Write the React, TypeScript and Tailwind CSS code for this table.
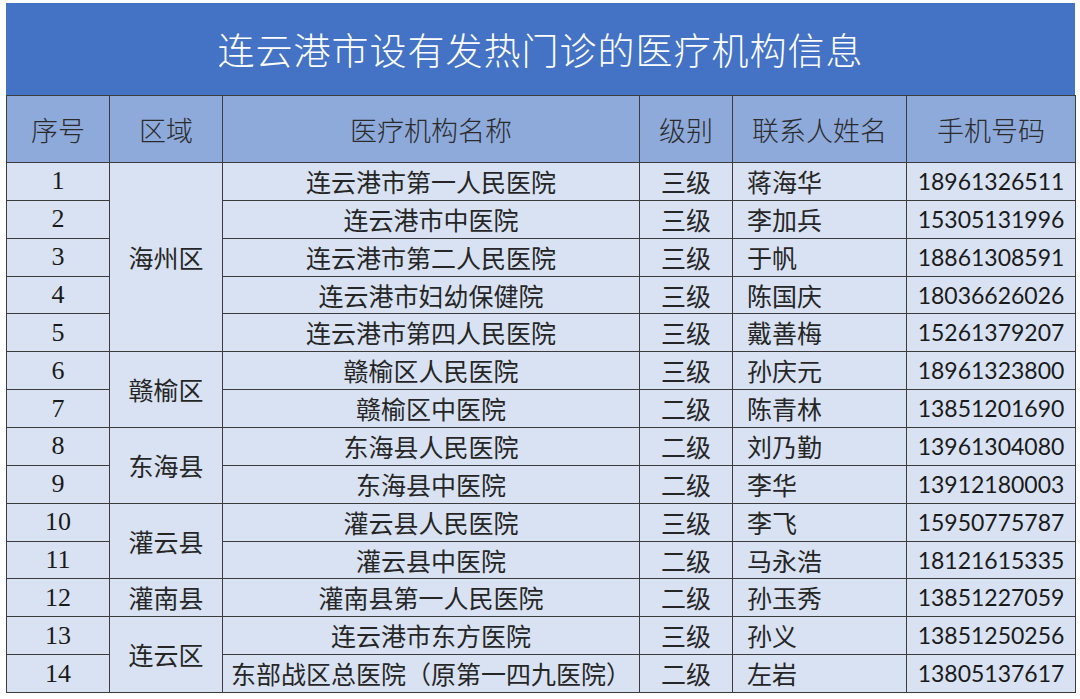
import React from "react";

type Row = {
  no: number;
  name: string;
  level: string;
  contact: string;
  phone: string;
};

type Region = {
  region: string;
  rows: Row[];
};

const regions: Region[] = [
  {
    region: "海州区",
    rows: [
      { no: 1, name: "连云港市第一人民医院", level: "三级", contact: "蒋海华", phone: "18961326511" },
      { no: 2, name: "连云港市中医院", level: "三级", contact: "李加兵", phone: "15305131996" },
      { no: 3, name: "连云港市第二人民医院", level: "三级", contact: "于帆", phone: "18861308591" },
      { no: 4, name: "连云港市妇幼保健院", level: "三级", contact: "陈国庆", phone: "18036626026" },
      { no: 5, name: "连云港市第四人民医院", level: "三级", contact: "戴善梅", phone: "15261379207" },
    ],
  },
  {
    region: "赣榆区",
    rows: [
      { no: 6, name: "赣榆区人民医院", level: "三级", contact: "孙庆元", phone: "18961323800" },
      { no: 7, name: "赣榆区中医院", level: "二级", contact: "陈青林", phone: "13851201690" },
    ],
  },
  {
    region: "东海县",
    rows: [
      { no: 8, name: "东海县人民医院", level: "二级", contact: "刘乃勤", phone: "13961304080" },
      { no: 9, name: "东海县中医院", level: "二级", contact: "李华", phone: "13912180003" },
    ],
  },
  {
    region: "灌云县",
    rows: [
      { no: 10, name: "灌云县人民医院", level: "三级", contact: "李飞", phone: "15950775787" },
      { no: 11, name: "灌云县中医院", level: "二级", contact: "马永浩", phone: "18121615335" },
    ],
  },
  {
    region: "灌南县",
    rows: [
      { no: 12, name: "灌南县第一人民医院", level: "二级", contact: "孙玉秀", phone: "13851227059" },
    ],
  },
  {
    region: "连云区",
    rows: [
      { no: 13, name: "连云港市东方医院", level: "三级", contact: "孙义", phone: "13851250256" },
      { no: 14, name: "东部战区总医院（原第一四九医院）", level: "二级", contact: "左岩", phone: "13805137617" },
    ],
  },
];

const headers = ["序号", "区域", "医疗机构名称", "级别", "联系人姓名", "手机号码"];

const cell = "border border-[#3c3c3c] p-0";

export default function App() {
  return (
    <div className="w-[1080px] h-[699px] bg-white overflow-hidden font-['Noto_Sans_CJK_SC',sans-serif] text-[#262626]">
      <div className="ml-[6px] mt-[3px] w-[1069px] h-[92px] bg-[#4472c4] flex items-center justify-center">
        <span className="text-[37px] font-light text-white tracking-[1px] leading-none">
          连云港市设有发热门诊的医疗机构信息
        </span>
      </div>
      <table className="ml-[6px] w-[1069px] border-collapse table-fixed">
        <colgroup>
          <col className="w-[103px]" />
          <col className="w-[113px]" />
          <col className="w-[417px]" />
          <col className="w-[93px]" />
          <col className="w-[174px]" />
          <col className="w-[169px]" />
        </colgroup>
        <thead>
          <tr className="h-[67px] bg-[#8eaadb]">
            {headers.map((h) => (
              <th
                key={h}
                className={`${cell} text-[27px] font-light text-[#2b2b2b] text-center align-middle leading-none`}
              >
                {h}
              </th>
            ))}
          </tr>
        </thead>
        <tbody className="bg-[#d9e2f3]">
          {regions.map((g) =>
            g.rows.map((r, i) => (
              <tr key={r.no} className="h-[37.86px]">
                <td className={`${cell} text-center text-[26px] leading-none font-['Liberation_Serif',serif] text-[#1a1a1a]`}>
                  {r.no}
                </td>
                {i === 0 && (
                  <td
                    rowSpan={g.rows.length}
                    className={`${cell} text-center text-[25px] leading-none align-middle`}
                  >
                    {g.region}
                  </td>
                )}
                <td className={`${cell} text-center text-[25px] leading-none whitespace-nowrap`}>
                  {r.name}
                </td>
                <td className={`${cell} text-center text-[25px] leading-none`}>{r.level}</td>
                <td className={`${cell} pl-[14px] text-left text-[25px] leading-none`}>{r.contact}</td>
                <td className={`${cell} text-center text-[23px] leading-none font-['Lato',sans-serif] text-[#1a1a1a]`}>
                  {r.phone}
                </td>
              </tr>
            )),
          )}
        </tbody>
      </table>
    </div>
  );
}
